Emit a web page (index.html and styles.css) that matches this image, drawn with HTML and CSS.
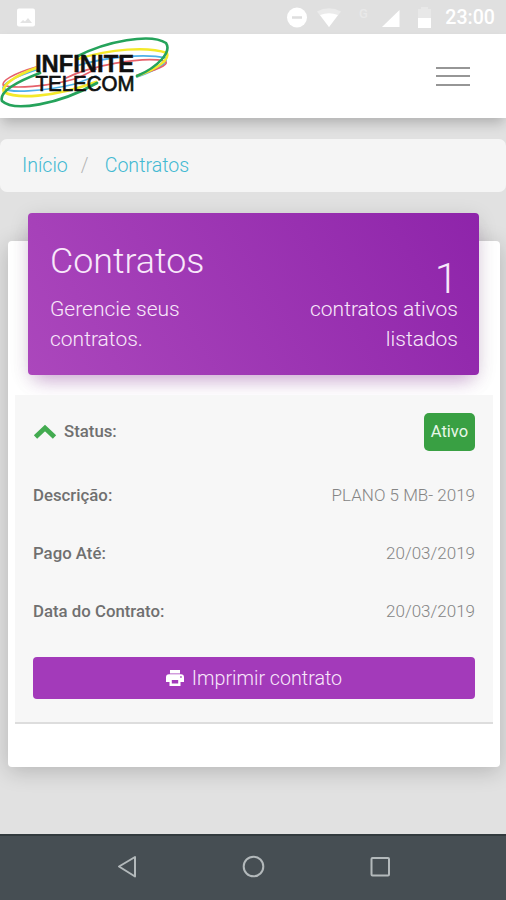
FILE: index.html
```html
<!DOCTYPE html>
<html lang="pt-BR">
<head>
<meta charset="utf-8">
<title>Contratos</title>
<link rel="stylesheet" href="styles.css">
</head>
<body>
<div class="statusbar">
  <svg class="status-icons" width="440" height="34" viewBox="0 0 440 34">
    <rect x="17" y="8.500" width="18" height="18" rx="2" fill="#fff"/>
    <path d="M20 23l3-3 2 1.500 3-3.500 4 5z" fill="#e3e3e3"/>
    <circle cx="297" cy="17.500" r="10" fill="#fff"/>
    <path d="M292 17.500h10" stroke="#dedede" stroke-width="2.500"/>
    <path d="M317 11.500Q329 5 341 11.500L329 27z" fill="#ebebeb"/>
    <path d="M320 15Q329 11.500 338 15L329 27z" fill="#fff"/>
    <text x="359" y="18" class="net">G</text>
    <path d="M399.500 10v17H382z" fill="#fff"/>
    <path d="M418 9h3V7h7v2h3v9h-13z" fill="#e8e8e8"/>
    <path d="M418 18h13v10h-13z" fill="#fff"/>
  </svg>
  <span class="clock">23:00</span>
</div>
<header class="navbar">
  <svg class="logo" width="172" height="84" viewBox="0 34 172 84">
    <g fill="none" stroke-linecap="round">
      <g stroke="#4fb0e8">
        <path d="M36 70C12 78 3 84 3 88C8 93 42 92 75 84L96 76" stroke-width="1.800"/>
        <path d="M76 66C105 57 145 53 166 58C168 63 158 69 137 77" stroke-width="1.800"/>
      </g>
      <g stroke="#e5606a">
        <path d="M36 67C12 74 2 81 3 85C12 89 48 87 78 78L96 69" stroke-width="1.600"/>
        <path d="M66 78C90 66 142 56 165 61C171 65 153 71 137 75" stroke-width="1.600"/>
      </g>
      <g stroke="#f4e92a">
        <path d="M36 68C14 76 1 86 4 92C16 99 52 98 96 82" stroke-width="2.800"/>
        <path d="M78 59C110 49 148 46 167 53C170 59 158 69 137 76" stroke-width="2.500"/>
      </g>
      <g stroke="#25a35b">
        <path d="M40 73C16 82 -1 92 2 101C14 112 58 105 97 83" stroke-width="2.700"/>
        <path d="M76 57C106 41 151 33 166 43C172 52 158 67 137 76" stroke-width="2.600"/>
      </g>
    </g>
    <text x="35" y="72" textLength="99" lengthAdjust="spacingAndGlyphs" class="brand brand-top">INFINITE</text>
    <text x="35.500" y="91" textLength="99" lengthAdjust="spacingAndGlyphs" class="brand brand-bottom">TELECOM</text>
  </svg>
  <div class="burger"><i></i><i></i><i></i></div>
</header>
<main>
  <nav class="breadcrumb"><a>Início</a><span>/</span><a>Contratos</a></nav>
  <section class="card">
    <div class="card-header">
      <div class="intro"><h1>Contratos</h1><p>Gerencie seus contratos.</p></div>
      <div class="count"><strong>1</strong><p>contratos ativos listados</p></div>
    </div>
    <div class="contract">
      <div class="row status">
        <b><svg class="chevron" width="24" height="16" viewBox="0 0 24 16"><path d="M2.500 14L12 5l9.500 9" fill="none" stroke="#43ab50" stroke-width="4.800"/></svg>Status:</b>
        <span class="badge">Ativo</span>
      </div>
      <div class="row"><b>Descrição:</b><span>PLANO 5 MB- 2019</span></div>
      <div class="row"><b>Pago Até:</b><span>20/03/2019</span></div>
      <div class="row"><b>Data do Contrato:</b><span>20/03/2019</span></div>
      <div class="print">
        <svg width="18" height="16" viewBox="0 0 18 16"><path d="M4 0h10v3.500H4z" fill="#fff"/><path fill-rule="evenodd" d="M3 4.300h12a3 3 0 0 1 3 3V12h-3.500v4h-11v-4H0V7.300a3 3 0 0 1 3-3zM5.800 10v3.500h6.400V10zM14.200 6.200v1.500h1.500V6.200z" fill="#fff"/></svg>
        <span>Imprimir contrato</span>
      </div>
    </div>
  </section>
</main>
<footer class="android-nav">
  <svg width="506" height="66" viewBox="0 834 506 66" fill="none" stroke="#b3b9bb" stroke-width="2">
    <path d="M119 866.500L135 857v19.500z" stroke-linejoin="round"/>
    <circle cx="253.500" cy="866.500" r="9.800"/>
    <rect x="371.500" y="858" width="17.500" height="17.500" rx="1"/>
  </svg>
</footer>
</body>
</html>
```
FILE: styles.css
```css
* { box-sizing: border-box; }
body {
  margin: 0;
  height: 900px;
  display: flex;
  flex-direction: column;
  overflow: hidden;
  background: #e1e1e1;
  font-family: Roboto, "Liberation Sans", sans-serif;
  font-weight: 300;
}
h1, p { margin: 0; font-weight: 300; }
.statusbar {
  height: 34px;
  flex: none;
  display: flex;
  justify-content: space-between;
  padding-right: 11px;
  background: #e0e0e0;
}
.net { font-size: 13px; font-weight: 500; fill: #e9e9e9; }
.clock { color: #fff; font-size: 19.6px; font-weight: 500; line-height: 36px; }
.navbar {
  height: 84px;
  flex: none;
  display: flex;
  justify-content: space-between;
  align-items: center;
  padding-right: 36px;
  background: #fff;
  box-shadow: 0 7px 12px -2px rgba(0, 0, 0, .22);
}
.brand { font-family: "Liberation Sans", sans-serif; fill: #101010; }
.brand-top { font-size: 24.5px; font-weight: 700; stroke: #101010; stroke-width: .5px; }
.brand-bottom { font-size: 22px; stroke: #101010; stroke-width: .7px; }
.burger { display: grid; gap: 6px; width: 34px; }
.burger i { height: 2px; margin-top: .5px; background: #969696; }
main { flex: 1; padding-top: 21px; }
.breadcrumb {
  height: 53px;
  display: flex;
  align-items: center;
  padding: 0 22px 1px;
  border-radius: 7px;
  background: #f5f5f5;
  color: #43b9d2;
  font-size: 19.6px;
}
.breadcrumb span { color: #b5b5b5; margin: 0 16px 0 13px; }
.card {
  height: 526px;
  margin: 49px 6px 0 8px;
  padding: 0 7px;
  display: flex;
  flex-direction: column;
  border-radius: 4px;
  background: #fff;
  box-shadow: 0 4px 22px rgba(0, 0, 0, .2);
}
.card-header {
  height: 162px;
  flex: none;
  margin: -28px 14px 0 13px;
  padding: 0 21px 0 22px;
  display: flex;
  justify-content: space-between;
  border-radius: 4px;
  background: linear-gradient(60deg, #ab47bc, #8e24aa);
  box-shadow: 0 12px 18px -8px rgba(156, 39, 176, .35), 0 4px 20px rgba(0, 0, 0, .12);
  color: #f8e8fa;
  font-size: 21px;
  line-height: 29.5px;
}
.intro { width: 170px; padding-top: 27px; }
h1 { font-size: 35.8px; line-height: 42px; margin-bottom: 13px; }
.count { width: 170px; padding-top: 35px; text-align: right; }
.count strong { display: block; font-size: 42px; font-weight: 300; line-height: 61px; height: 47px; }
.contract {
  height: 329px;
  margin-top: 20px;
  padding: 3px 18px 0;
  background: #f7f7f7;
  border-bottom: 2px solid #ddd;
}
.row {
  height: 58px;
  display: flex;
  justify-content: space-between;
  align-items: center;
  color: #858585;
  font-size: 17px;
}
.row b { color: #707070; font-weight: 500; font-size: 16.8px; display: flex; align-items: center; }
.row.status { height: 68px; padding-bottom: 1px; }
.row.status b { padding-bottom: 1px; }
.chevron { margin-right: 7px; }
.badge {
  width: 51px;
  height: 38px;
  line-height: 37px;
  text-align: center;
  border-radius: 5px;
  background: #39a043;
  color: #e8f7e9;
  font-weight: 400;
  font-size: 16.5px;
}
.print {
  height: 42px;
  margin-top: 17px;
  display: flex;
  align-items: center;
  justify-content: center;
  gap: 8px;
  border-radius: 4px;
  background: #a33aba;
  color: #f8e8fa;
  font-size: 19.7px;
}
.android-nav { height: 66px; flex: none; background: #464e53; box-shadow: inset 0 2px #323a3e; }
```
